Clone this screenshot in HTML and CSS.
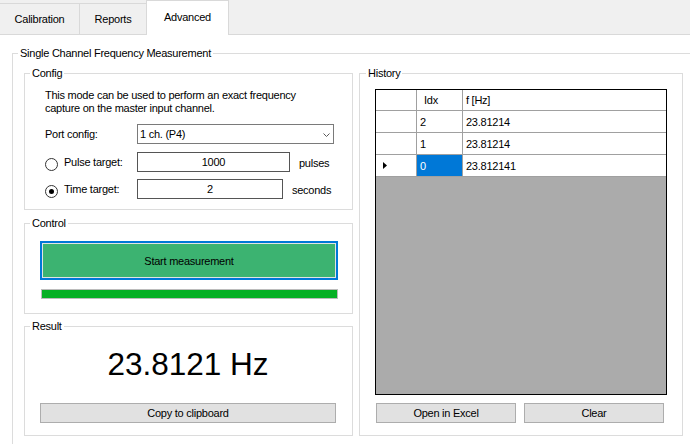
FILE: index.html
```html
<!DOCTYPE html>
<html>
<head>
<meta charset="utf-8">
<link rel="stylesheet" href="styles.css">
</head>
<body>
<div class="tabs">
  <div class="tab first">Calibration</div>
  <div class="tab">Reports</div>
  <div class="tab active">Advanced</div>
</div>
<div class="page">
  <fieldset class="gb outer">
    <legend>Single Channel Frequency Measurement</legend>
    <div class="outer-body">
      <div class="left-col">
        <fieldset class="gb config">
          <legend>Config</legend>
          <div class="config-body">
            <p class="desc">This mode can be used to perform an exact frequency<br>capture on the master input channel.</p>
            <div class="form">
              <div class="row port">
                <span class="lbl">Port config:</span>
                <div class="combo">
                  <span>1 ch. (P4)</span>
                  <svg class="chev" width="7" height="4" viewBox="0 0 7 4"><polyline points="0.5,0.5 3.5,3.5 6.5,0.5" fill="none" stroke="#5a5a5a" stroke-width="1"/></svg>
                </div>
              </div>
              <div class="row pulse">
                <span class="lbl"><span class="radio"></span>Pulse target:</span>
                <div class="input w-pulse">1000</div>
                <span class="unit">pulses</span>
              </div>
              <div class="row time">
                <span class="lbl"><span class="radio on"></span>Time target:</span>
                <div class="input w-time">2</div>
                <span class="unit">seconds</span>
              </div>
            </div>
          </div>
        </fieldset>
        <fieldset class="gb control">
          <legend>Control</legend>
          <div class="control-body">
            <div class="start-btn">Start measurement</div>
            <div class="progress"></div>
          </div>
        </fieldset>
        <fieldset class="gb result">
          <legend>Result</legend>
          <div class="result-body">
            <div class="big">23.8121 Hz</div>
            <div class="btn copy">Copy to clipboard</div>
          </div>
        </fieldset>
      </div>
      <fieldset class="gb history">
        <legend>History</legend>
        <div class="history-body">
          <div class="grid">
            <div class="grid-row head">
              <div class="c c0"></div>
              <div class="c c1">Idx</div>
              <div class="c c2">f [Hz]</div>
            </div>
            <div class="grid-row data">
              <div class="c c0"></div>
              <div class="c c1">2</div>
              <div class="c c2">23.81214</div>
            </div>
            <div class="grid-row data">
              <div class="c c0"></div>
              <div class="c c1">1</div>
              <div class="c c2">23.81214</div>
            </div>
            <div class="grid-row data">
              <div class="c c0"><svg class="ind" width="4" height="7" viewBox="0 0 4 7"><polygon points="0,0 4,3.5 0,7" fill="#000"/></svg></div>
              <div class="c c1 sel">0</div>
              <div class="c c2">23.812141</div>
            </div>
          </div>
          <div class="hist-btns">
            <div class="btn">Open in Excel</div>
            <div class="btn">Clear</div>
          </div>
        </div>
      </fieldset>
    </div>
  </fieldset>
</div>
</body>
</html>
```
FILE: styles.css
```css
* { box-sizing: border-box; }
html, body { margin: 0; padding: 0; }
body {
  width: 690px;
  height: 444px;
  overflow: hidden;
  background: #fff;
  font-family: "Liberation Sans", Arial, sans-serif;
  font-size: 11px;
  letter-spacing: -0.25px;
  color: #000;
}

/* Tabs */
.tabs {
  display: flex;
  align-items: flex-end;
  height: 35px;
  background: #f0f0f0;
  border-bottom: 1px solid #d9d9d9;
}
.tab {
  height: 31px;
  border-top: 1px solid #d9d9d9;
  border-left: 1px solid #d9d9d9;
  background: #f0f0f0;
  display: flex;
  align-items: center;
  justify-content: center;
  width: 67px;
}
.tab.first { width: 79px; border-left: none; }
.tab.active {
  width: 83px;
  height: 35px;
  margin-bottom: -1px;
  background: #fff;
  border-right: 1px solid #d9d9d9;
  padding-bottom: 3px;
}

/* Page / group boxes */
.page { padding: 12px 0 0 12px; }
fieldset.gb {
  margin: 0;
  padding: 0;
  min-width: 0;
  border: 1px solid #dcdcdc;
}
.gb > legend {
  margin-left: 5px;
  padding: 0 2px;
  line-height: 13px;
  font-size: 11px;
}
fieldset.outer {
  width: 678px;
  height: 397px;
  border-right: none;
  border-bottom: none;
}
.outer-body {
  display: flex;
  gap: 6px;
  padding: 7px 0 0 11px;
}
.left-col {
  display: flex;
  flex-direction: column;
  width: 329px;
}
fieldset.config { height: 143px; }
fieldset.control { height: 97px; margin-top: 7px; }
fieldset.result { height: 116px; margin-top: 6px; }
fieldset.history { width: 324px; height: 369px; }
.history > legend { margin-left: 6px; }

/* Config */
.config-body { padding: 9px 0 0 20px; }
.desc { margin: 0; line-height: 13px; white-space: nowrap; }
.form { margin-top: 9px; display: flex; flex-direction: column; }
.row { display: flex; align-items: center; height: 20px; }
.row.port { margin-bottom: 8px; }
.row.pulse { margin-bottom: 7px; }
.lbl { width: 92px; height: 20px; display: flex; align-items: center; white-space: nowrap; }
.radio {
  width: 13px;
  height: 13px;
  border: 1px solid #333;
  border-radius: 50%;
  background: #fff;
  margin-right: 6px;
  margin-top: 4px;
  display: flex;
  align-items: center;
  justify-content: center;
  flex: none;
}
.radio.on::after {
  content: "";
  width: 5px;
  height: 5px;
  border-radius: 50%;
  background: #000;
}
.combo {
  width: 197px;
  height: 20px;
  border: 1px solid #7a7a7a;
  background: #fff;
  display: flex;
  align-items: center;
  justify-content: space-between;
  padding: 0 3px 0 2px;
}
.chev { display: block; margin-top: 1px; }
.input {
  height: 20px;
  border: 1px solid #555;
  background: #fff;
  display: flex;
  align-items: center;
  justify-content: center;
}
.w-pulse { width: 153px; }
.w-time { width: 146px; }
.unit { margin-left: 9px; padding-top: 2px; }

/* Control */
.control-body { padding: 11px 0 0 15px; }
.start-btn {
  width: 298px;
  height: 39px;
  border: 2px solid #0078d7;
  box-shadow: inset 0 0 0 1px #e3e3e3;
  background: #3cb371;
  display: flex;
  align-items: center;
  justify-content: center;
}
.progress {
  margin: 9px 0 0 1px;
  width: 297px;
  height: 10px;
  border: 1px solid #bcbcbc;
  background: #06b025;
}

/* Result */
.result-body { padding: 13px 0 0 15px; }
.big {
  width: 296px;
  font-size: 31.5px;
  line-height: 36px;
  letter-spacing: 0;
  text-align: center;
}
.btn {
  height: 20px;
  background: #e1e1e1;
  border: 1px solid #adadad;
  display: flex;
  align-items: center;
  justify-content: center;
}
.copy { width: 296px; margin-top: 21px; }

/* History */
.history-body { padding: 9px 15px 0 15px; }
.grid {
  width: 292px;
  height: 306px;
  border: 1px solid #000;
  background: #ababab;
  display: flex;
  flex-direction: column;
}
.grid-row { display: flex; background: #fff; }
.grid-row.head { height: 21px; }
.grid-row.data { height: 22px; }
.c {
  border-right: 1px solid #a0a0a0;
  border-bottom: 1px solid #a0a0a0;
  display: flex;
  align-items: center;
  padding-left: 3px;
  white-space: nowrap;
}
.data .c { padding-top: 1px; }
.c0 { width: 41px; padding-left: 7px; }
.c1 { width: 46px; }
.c2 { flex: 1; border-right: none; }
.head .c1 { padding-left: 7px; }
.sel { background: #0078d7; color: #fff; }
.ind { display: block; margin-top: -1px; }
.hist-btns {
  display: flex;
  gap: 8px;
  margin-top: 8px;
  padding-left: 1px;
}
.hist-btns .btn { width: 140px; }
```
